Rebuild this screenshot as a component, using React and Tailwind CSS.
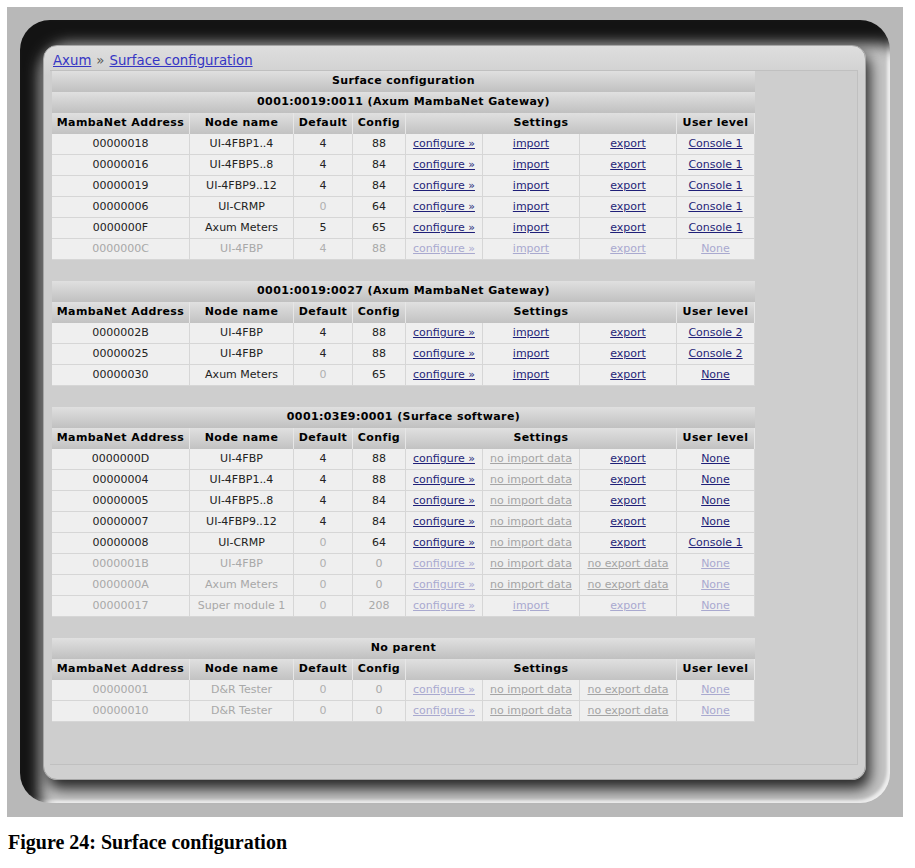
import React from 'react'

const W = ['w-[138px]', 'w-[104px]', 'w-[59px]', 'w-[53px]', 'w-[77px]', 'w-[97px]', 'w-[97px]', 'w-[78px]']

const groups = [
  {
    title: '0001:0019:0011 (Axum MambaNet Gateway)',
    rows: [
      { a: '00000018', n: 'UI-4FBP1..4', d: '4', c: '88', imp: 'import', exp: 'export', u: 'Console 1' },
      { a: '00000016', n: 'UI-4FBP5..8', d: '4', c: '84', imp: 'import', exp: 'export', u: 'Console 1' },
      { a: '00000019', n: 'UI-4FBP9..12', d: '4', c: '84', imp: 'import', exp: 'export', u: 'Console 1' },
      { a: '00000006', n: 'UI-CRMP', d: '0', c: '64', imp: 'import', exp: 'export', u: 'Console 1' },
      { a: '0000000F', n: 'Axum Meters', d: '5', c: '65', imp: 'import', exp: 'export', u: 'Console 1' },
      { a: '0000000C', n: 'UI-4FBP', d: '4', c: '88', imp: 'import', exp: 'export', u: 'None', off: true },
    ],
  },
  {
    title: '0001:0019:0027 (Axum MambaNet Gateway)',
    rows: [
      { a: '0000002B', n: 'UI-4FBP', d: '4', c: '88', imp: 'import', exp: 'export', u: 'Console 2' },
      { a: '00000025', n: 'UI-4FBP', d: '4', c: '88', imp: 'import', exp: 'export', u: 'Console 2' },
      { a: '00000030', n: 'Axum Meters', d: '0', c: '65', imp: 'import', exp: 'export', u: 'None' },
    ],
  },
  {
    title: '0001:03E9:0001 (Surface software)',
    rows: [
      { a: '0000000D', n: 'UI-4FBP', d: '4', c: '88', imp: null, exp: 'export', u: 'None' },
      { a: '00000004', n: 'UI-4FBP1..4', d: '4', c: '88', imp: null, exp: 'export', u: 'None' },
      { a: '00000005', n: 'UI-4FBP5..8', d: '4', c: '84', imp: null, exp: 'export', u: 'None' },
      { a: '00000007', n: 'UI-4FBP9..12', d: '4', c: '84', imp: null, exp: 'export', u: 'None' },
      { a: '00000008', n: 'UI-CRMP', d: '0', c: '64', imp: null, exp: 'export', u: 'Console 1' },
      { a: '0000001B', n: 'UI-4FBP', d: '0', c: '0', imp: null, exp: null, u: 'None', off: true },
      { a: '0000000A', n: 'Axum Meters', d: '0', c: '0', imp: null, exp: null, u: 'None', off: true },
      { a: '00000017', n: 'Super module 1', d: '0', c: '208', imp: 'import', exp: 'export', u: 'None', off: true },
    ],
  },
  {
    title: 'No parent',
    rows: [
      { a: '00000001', n: 'D&R Tester', d: '0', c: '0', imp: null, exp: null, u: 'None', off: true },
      { a: '00000010', n: 'D&R Tester', d: '0', c: '0', imp: null, exp: null, u: 'None', off: true },
    ],
  },
]

const bar = 'h-[21px] w-[703px] flex items-center justify-center font-bold tracking-[0.4px] text-black bg-[linear-gradient(to_bottom,#e0e0e0,#c0c0c0)]'

function Cell({ i, children, head }) {
  return (
    <div
      className={
        W[i] +
        ' h-[21px] shrink-0 flex items-center justify-center whitespace-nowrap ' +
        (head
          ? 'border-r border-[#e6e6e6] bg-[linear-gradient(to_bottom,#e0e0e0,#c2c2c2)]'
          : 'border-r border-b border-[#d6d6d6] bg-[#efefef]')
      }
    >
      {children}
    </div>
  )
}

function Lnk({ children, dim, gray }) {
  const color = gray ? 'text-[#a4a4a4]' : dim ? 'text-[#a9a9cf]' : 'text-[#1f1f78]'
  return <a href="#" className={'underline ' + color}>{children}</a>
}

function HeaderRow() {
  const labels = ['MambaNet Address', 'Node name', 'Default', 'Config']
  return (
    <div className="flex font-bold tracking-[0.4px] text-black">
      {labels.map((l, i) => (
        <Cell key={l} i={i} head>{l}</Cell>
      ))}
      <div className="w-[271px] h-[21px] flex items-center justify-center border-r border-[#e6e6e6] bg-[linear-gradient(to_bottom,#e0e0e0,#c2c2c2)]">
        Settings
      </div>
      <Cell i={7} head>User level</Cell>
    </div>
  )
}

function DataRow({ r }) {
  const txt = r.off ? 'text-[#a8a8a8]' : 'text-[#222]'
  return (
    <div className="flex">
      <Cell i={0}><span className={txt}>{r.a}</span></Cell>
      <Cell i={1}><span className={txt}>{r.n}</span></Cell>
      <Cell i={2}><span className={r.off || r.d === '0' ? 'text-[#b0b0b0]' : 'text-[#222]'}>{r.d}</span></Cell>
      <Cell i={3}><span className={txt}>{r.c}</span></Cell>
      <Cell i={4}><Lnk dim={r.off}>configure »</Lnk></Cell>
      <Cell i={5}>{r.imp ? <Lnk dim={r.off}>import</Lnk> : <Lnk gray>no import data</Lnk>}</Cell>
      <Cell i={6}>{r.exp ? <Lnk dim={r.off}>export</Lnk> : <Lnk gray>no export data</Lnk>}</Cell>
      <Cell i={7}><Lnk dim={r.off}>{r.u}</Lnk></Cell>
    </div>
  )
}

export default function App() {
  return (
    <div className="bg-white min-h-[868px] pt-[7px] pl-[7px] font-['DejaVu_Sans',Verdana,sans-serif]">
      <div className="w-[896px] h-[810px] bg-[#b8b8b8] pt-[13px] pl-[13px]">
        <div className="w-[870px] h-[783px] rounded-[30px] bg-[#c4c4c4] pt-[25px] pl-[23px] shadow-[inset_20px_24px_14px_rgba(0,0,0,0.9),inset_-3px_-3px_3px_rgba(255,255,255,0.7)]">
          <div className="w-[823px] h-[735px] rounded-[14px] border border-[#a6a6a6] bg-[linear-gradient(to_bottom,#dedede,#d0d0d0_30px,#d0d0d0)] shadow-[4px_9px_14px_rgba(0,0,0,0.8)] flex flex-col">
            <div className="h-[24px] pl-[9px] flex items-end pb-[3px] text-[13.3px] leading-none">
              <a href="#" className="underline text-[#3535c4]">Axum</a>
              <span className="text-[#555] mx-[5px]">»</span>
              <a href="#" className="underline text-[#3535c4]">Surface configuration</a>
            </div>
            <div className="ml-[6px] w-[808px] h-[695px] bg-[#cecece] border-t border-r border-b border-[#c0c0c0] pl-[2px] text-[11px]">
              <div className={bar}>Surface configuration</div>
              {groups.map((g, gi) => (
                <div key={g.title}>
                  {gi > 0 && <div className="h-[21px]" />}
                  <div className={bar}>{g.title}</div>
                  <HeaderRow />
                  {g.rows.map((r) => (
                    <DataRow key={r.a} r={r} />
                  ))}
                </div>
              ))}
            </div>
          </div>
        </div>
      </div>
      <div className="pt-[15px] pl-px font-['Liberation_Serif',serif] font-bold text-[20px] text-black leading-[20px]">
        Figure 24: Surface configuration
      </div>
    </div>
  )
}
